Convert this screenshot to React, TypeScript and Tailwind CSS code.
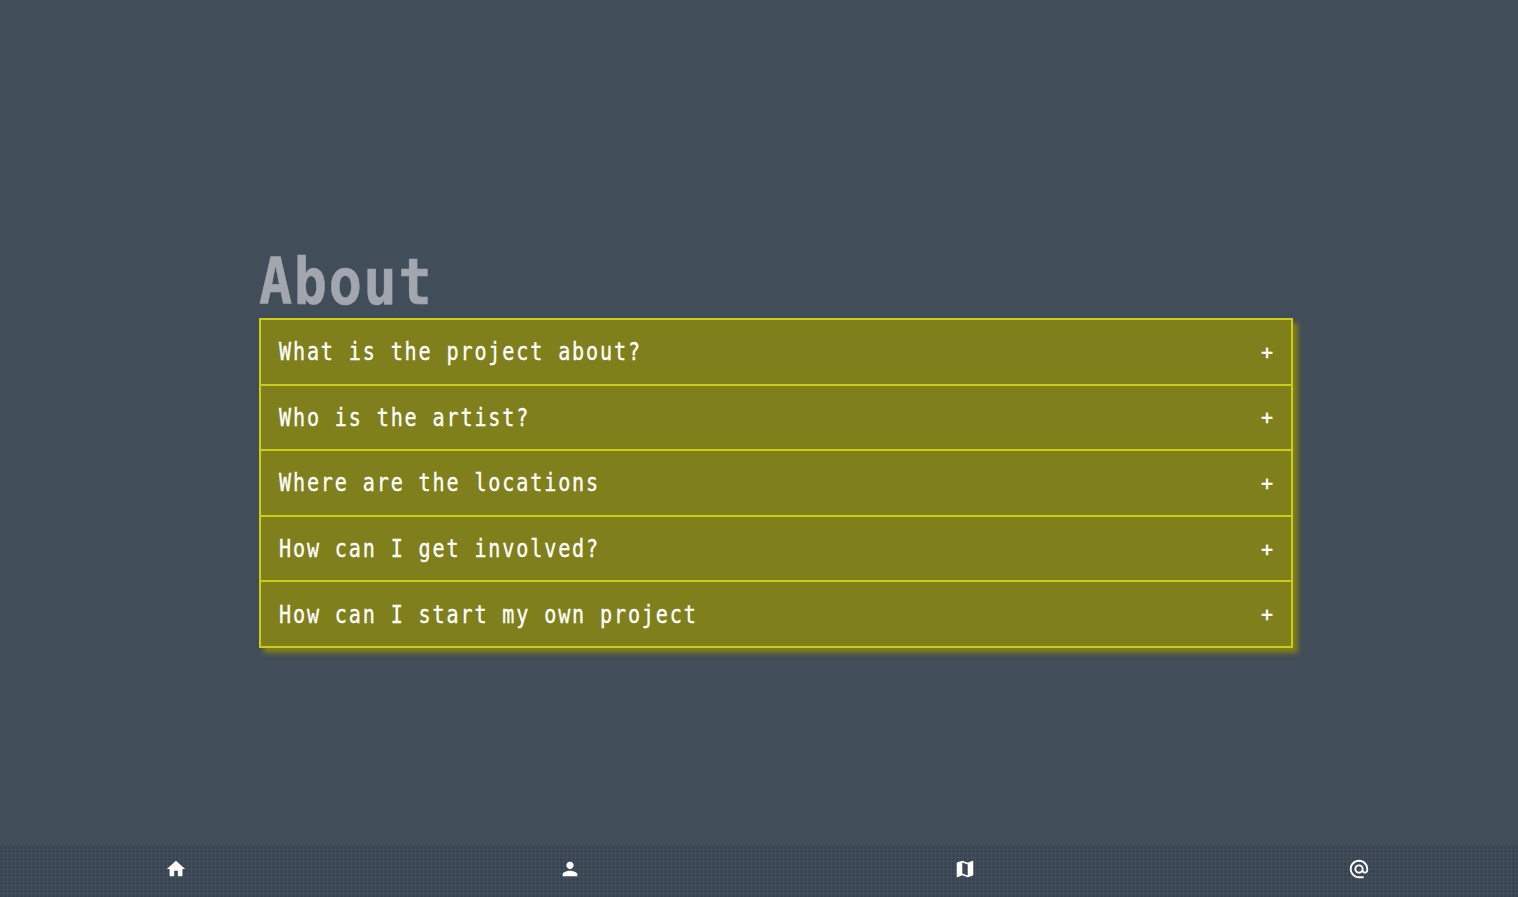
import { MdHome, MdPerson, MdMap, MdAlternateEmail } from "react-icons/md";

const questions = [
  "What is the project about?",
  "Who is the artist?",
  "Where are the locations",
  "How can I get involved?",
  "How can I start my own project",
];

export default function App() {
  return (
    <div className="flex h-screen flex-col overflow-hidden bg-[#424d5a] text-white [font-family:'DejaVu_Sans_Mono',monospace]">
      <main className="flex-1 pt-[246px] pl-[259px]">
        <h1 className="h-[72px] w-max origin-left scale-x-[0.86] text-[64px] leading-[72px] font-bold tracking-[2px] text-[#a2a6af] [-webkit-text-stroke:0.6px_#a2a6af]">
          About
        </h1>
        <div className="flex h-[330px] w-[1034px] flex-col divide-y-2 divide-[#cdcd16] border-2 border-[#cdcd16] bg-[#7f7f1c] shadow-[5px_5px_5px_#7f7f1c]">
          {questions.map((q) => (
            <button key={q} className="flex flex-1 items-center justify-between px-[18px]">
              <span className="block origin-left scale-x-[0.82] pt-px text-[24.5px] leading-[30px] tracking-[2.27px] whitespace-nowrap [-webkit-text-stroke:0.35px_white]">{q}</span>
              <span className="text-[20px] leading-[30px] [-webkit-text-stroke:0.35px_white]">+</span>
            </button>
          ))}
        </div>
      </main>
      <nav className="flex h-[51px] items-start justify-between bg-[#394453] [background-image:linear-gradient(#434e5b_1px,transparent_1px),linear-gradient(90deg,#434e5b_1px,transparent_1px)] [background-position:-1px_-1px] [background-size:4px_4px] pt-[12px] pr-[148px] pl-[165px]">
        <MdHome size={22} />
        <MdPerson size={22} />
        <MdMap size={22} />
        <MdAlternateEmail size={22} />
      </nav>
    </div>
  );
}
